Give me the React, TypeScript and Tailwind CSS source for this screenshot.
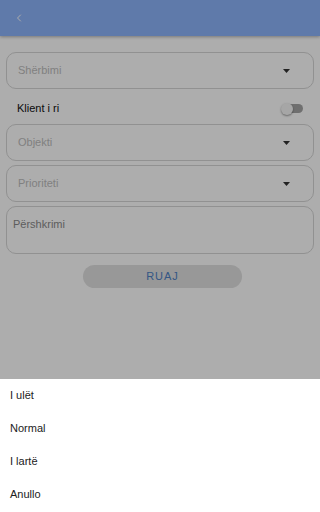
import { ChevronLeft } from 'lucide-react';

function SelectField({ label }: { label: string }) {
  return (
    <div className="h-[37px] mx-[6px] rounded-[10px] border border-[#d6d6d6] flex items-center justify-between pl-[11px] pr-[23px]">
      <span className="text-[11px] text-[#bdbdbd]">{label}</span>
      <svg width="7" height="4" viewBox="0 0 7 4">
        <path d="M0 0h7L3.5 4z" fill="#333" />
      </svg>
    </div>
  );
}

export default function App() {
  const options = ['I ulët', 'Normal', 'I lartë', 'Anullo'];

  return (
    <div className="relative w-[320px] h-[512px] overflow-hidden bg-white" style={{ fontFamily: '"Liberation Sans", Arial, sans-serif' }}>
      <div className="h-[36px] bg-[#8db4fb] shadow-[0_1px_3px_rgba(0,0,0,0.3)] flex items-center pl-[13px]">
        <ChevronLeft className="w-[12px] h-[12px] text-white" strokeWidth={2} />
      </div>

      <div className="pt-[16px] flex flex-col">
        <SelectField label="Shërbimi" />
        <div className="h-[35px] flex items-center justify-between pl-[17px] pr-[17px] pt-[4px]">
          <span className="text-[11px] text-[#111]">Klient i ri</span>
          <div className="relative w-[22px] h-[12px] flex items-center">
            <div className="absolute right-0 w-[18px] h-[9px] rounded-full bg-[#a4a4a4]" />
            <div className="absolute left-0 w-[12px] h-[12px] rounded-full bg-[#f5f5f5] shadow-[0_1px_2px_rgba(0,0,0,0.4)]" />
          </div>
        </div>
        <SelectField label="Objekti" />
        <div className="h-[4px]" />
        <SelectField label="Prioriteti" />
        <div className="h-[4px]" />
        <div className="h-[48px] mx-[6px] rounded-[10px] border border-[#d6d6d6] pl-[6px] pt-[11px]">
          <div className="text-[11px] leading-[13px] text-[#8a8a8a]">Përshkrimi</div>
        </div>
        <div className="flex justify-center pt-[11px] pl-[5px]">
          <button className="w-[159px] h-[23px] rounded-full bg-[#e0e0e0] text-[#4d7fc4] text-[11px] tracking-[1px] font-medium">
            RUAJ
          </button>
        </div>
      </div>

      <div className="absolute inset-0 bg-black/[0.32]" />

      <div className="absolute left-0 right-0 bottom-0 h-[133px] bg-white flex flex-col">
        {options.map(o => (
          <div key={o} className="h-[33px] flex items-center pl-[10px] text-[11px] text-[#222]">
            {o}
          </div>
        ))}
      </div>
    </div>
  );
}
